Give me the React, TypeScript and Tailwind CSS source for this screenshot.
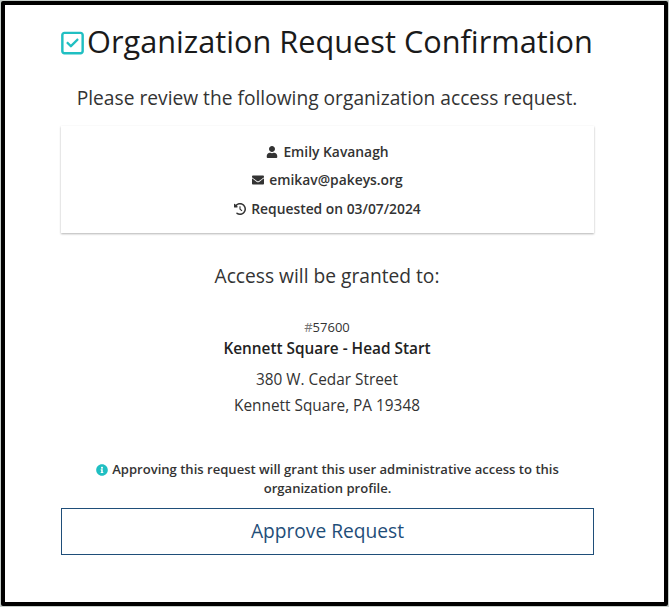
import { FaUser, FaEnvelope, FaInfoCircle } from 'react-icons/fa';
import { FaRegSquareCheck, FaClockRotateLeft } from 'react-icons/fa6';

const request = {
  name: 'Emily Kavanagh',
  email: 'emikav@pakeys.org',
  date: '03/07/2024',
};

const organization = {
  id: '57600',
  name: 'Kennett Square - Head Start',
  street: '380 W. Cedar Street',
  city: 'Kennett Square, PA 19348',
};

const RequestCard = () => (
  <div className="mt-[14px] h-[107px] bg-white pt-3 text-[13.85px] leading-[28.3px] font-semibold shadow-[0_1px_2px_rgba(0,0,0,0.3)]">
    <div className="flex items-center justify-center gap-[5px]">
      <FaUser className="size-3" />
      <span>{request.name}</span>
    </div>
    <div className="flex items-center justify-center gap-[5px]">
      <FaEnvelope className="size-3" />
      <span>{request.email}</span>
    </div>
    <div className="flex items-center justify-center gap-[5px]">
      <FaClockRotateLeft className="size-3" />
      <span>Requested on {request.date}</span>
    </div>
  </div>
);

const App = () => {
  return (
    <div className="h-[607px] w-[669px] bg-[#c5cdc9] p-px">
      <div className="h-[605px] w-[667px] rounded-[2px] border-4 border-black bg-white pt-3 pr-[70px] pl-[56px] font-['Open_Sans',sans-serif] text-[#333]">
        <h1 className="flex h-12 items-center whitespace-nowrap text-[30.72px] text-[#1a1a1a]">
          <FaRegSquareCheck className="mt-1 mr-[3px] h-[26px] w-[23px] shrink-0 text-[#20bfc2]" />
          Organization Request Confirmation
        </h1>

        <p className="mt-[18px] pr-px text-center text-[19.2px] leading-[29px]">
          Please review the following organization access request.
        </p>

        <RequestCard />

        <h2 className="mt-[28px] pr-px text-center text-[19.2px] leading-[29px]">Access will be granted to:</h2>

        <div className="mt-[27px] pr-px text-center">
          <div className="text-[13px] leading-5">
            <span className="text-[#777]">#</span>
            {organization.id}
          </div>
          <div className="mt-0.5 text-[15.36px] leading-5 font-semibold text-[#222]">{organization.name}</div>
          <div className="mt-2 text-[15.36px] leading-[26px]">
            <div>{organization.street}</div>
            <div>{organization.city}</div>
          </div>
        </div>

        <p className="mt-[41px] px-6 text-center text-[13.07px] leading-[19px] font-semibold">
          <FaInfoCircle className="mr-1 inline size-3 align-[-2px] text-[#20bfc2]" />
          Approving this request will grant this user administrative access to this organization profile.
        </p>

        <button className="mt-[10px] h-[47px] w-full border border-[#1f4e79] text-[19.2px] text-[#1f4e79]">
          Approve Request
        </button>
      </div>
    </div>
  );
};

export default App;
